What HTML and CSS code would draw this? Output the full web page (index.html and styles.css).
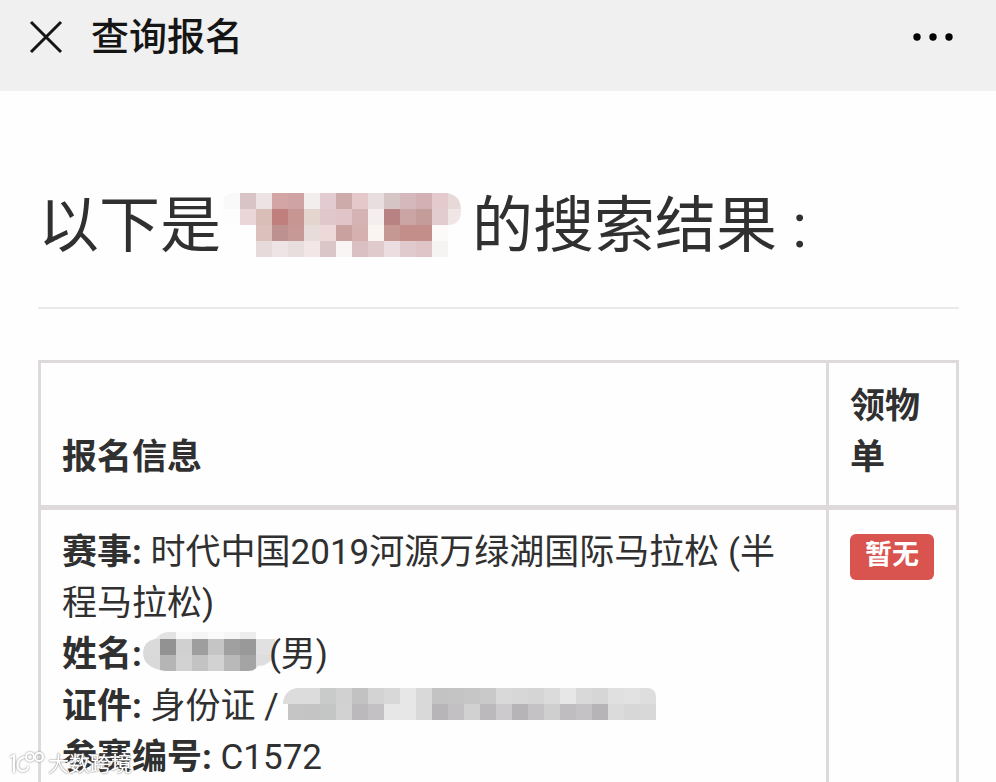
FILE: index.html
```html
<!DOCTYPE html>
<html lang="zh-CN">
<head>
  <meta charset="UTF-8">
  <meta name="viewport" content="width=device-width, initial-scale=1.0">
  <title>查询报名</title>
  <link rel="stylesheet" href="styles.css">
</head>
<body>

  <header class="navbar">
    <button class="icon-button" type="button" aria-label="关闭">
      <svg width="34" height="34" viewBox="0 0 34 34"><path d="M2 2L32 32M32 2L2 32" fill="none" stroke="#151515" stroke-width="3"/></svg>
    </button>
    <span class="navbar-title">查询报名</span>
    <button class="icon-button more" type="button" aria-label="更多">
      <svg width="40" height="8" viewBox="0 0 40 8" fill="#050505"><circle cx="4" cy="4" r="3.7"/><circle cx="20" cy="4" r="3.7"/><circle cx="36" cy="4" r="3.7"/></svg>
    </button>
  </header>

  <main class="container">
    <h1>以下是<svg class="mask mask-keyword" id="keyword" width="240" height="64" viewBox="0 0 240 64"></svg>的搜索结果 :</h1>

    <table class="table">
      <thead>
        <tr>
          <th>报名信息</th>
          <th class="pickup">领物单</th>
        </tr>
      </thead>
      <tbody>
        <tr>
          <td>
            <b>赛事:</b> 时代中国2019河源万绿湖国际马拉松 (半程马拉松)<br>
            <b>姓名:</b><svg class="mask mask-name" id="name" width="132" height="39" viewBox="0 0 132 39"></svg>(男)<br>
            <b>证件:</b> 身份证 /<svg class="mask mask-card" id="card" width="373" height="32" viewBox="0 0 373 32"></svg><br>
            <b>参赛编号:</b> C1572
          </td>
          <td class="pickup"><span class="label">暂无</span></td>
        </tr>
      </tbody>
    </table>
  </main>

  <div class="watermark">
    <svg width="38" height="28" viewBox="0 0 38 28" fill="none" stroke-linecap="round" stroke-linejoin="round">
      <g id="logo">
        <path d="M3 7L6 5V22M12 9C8 13 9 21 15 21C18 21 20 19 20 17M12 9L16 7"/>
        <circle cx="22" cy="7" r="4"/>
        <circle cx="31" cy="7" r="4"/>
      </g>
    </svg>
    <span class="watermark-text">大数跨境</span>
  </div>

  <script>
    // Hidden values are drawn as 16px tiles
    const masks = {
      keyword: {
        x: 3, y: 0, clip: 'M0 16Q0 0 14 0H226Q240 2 240 18Q240 32 227 32V64H34V32H3Q0 28 0 16Z',
        rows: [
          'f9f9f9 d8c3c6 eee3e4 d3a5a5 cfa3a4 f3eeee e3ccd1 cdabab e5c8ca e8dedf d5c5c5 d4b8bb d3b0b4 e4c9cd e8d9d9',
          'fdfdfd ead6d8 d9beb8 c07f7c c79692 e4d5cf dfc7cc e0c4c7 d5b2b4 f4eeef b88282 cba5a3 c49c9a e2ccd0 f0e6e6',
          'fefefe fefefe dbc0bc bc918f c69996 e8dcda edd9d7 c9a2a0 d5b0ae faf5f1 c59893 c38e8a c38e8a fbfaf9 fefefe',
          'fefefe fefefe e6dbda efe4e5 e8dedd f2e6e6 dac5c9 faf5f5 dac0c2 e1cacc ecdde1 e0cacd dfc5c8 f5f4f2 fefefe'
        ]
      },
      name: {
        x: 1, y: -9, clip: 'M0 20Q1 9 12 7Q18 0 26 0H113V7H132V20Q128 34 115 34Q112 39 105 39H22Q0 36 0 20Z',
        rows: [
          'e9e9e9 e2e2e2 fafafa f5f5f5 fafafa f5f5f5 ececec fefefe fefefe',
          'dadada 929292 d0d0d0 9e9e9e c5c5c5 a0a0a0 999999 e1e1e1 e1e1e1',
          'd9d9d9 b5b5b5 d2d2d2 c3c3c3 d2d2d2 b9b9b9 a4a4a4 dedede dedede'
        ]
      },
      card: {
        x: -11, y: 0, clip: 'M0 16Q2 0 16 0H366Q373 2 373 8V32H5V16Z',
        rows: [
          'dcdcdc dcdcdc dcdcdc c9caca d2d1d2 c3c2c3 d4d3d4 d9d8d9 e8e7e8 dad9da c4c3c4 c5c4c5 c7c6c7 cac9ca dad9da d8d7d8 d6d5d6 dcdbdc e8e7e8 dad9da d7d6d7 e1e0e1 e3e2e3 dfdedf',
          'c4c5c4 c4c5c4 c3c4c3 c4c6c5 d3d2d3 bbb9bb c3c1c3 e8e7e8 e8e7e8 dad9da b7b5b7 c2c0c2 d2d1d2 bbb9bb cccacc b6b4b6 c4c2c4 d0cfd0 bfbdbf c4c2c4 b6b4b6 dcdbdc d8d7d8 d9d8d9'
        ]
      }
    };

    for (const id in masks) {
      const mask = masks[id];
      let tiles = '';
      mask.rows.forEach((row, r) => {
        row.split(' ').forEach((color, c) => {
          tiles += `<rect x="${mask.x + c * 16}" y="${mask.y + r * 16}" width="16" height="16" fill="#${color}"/>`;
        });
      });
      // the rounded left end falls outside of the tile grid
      const first = '#' + mask.rows[1].split(' ')[0];
      document.getElementById(id).innerHTML =
        `<clipPath id="${id}-clip"><path d="${mask.clip}"/></clipPath>
         <g clip-path="url(#${id}-clip)" shape-rendering="crispEdges"><rect width="4" height="64" fill="${first}"/>${tiles}</g>`;
    }
  </script>

</body>
</html>
```
FILE: styles.css
```css
* {
  box-sizing: border-box;
}
body {
  font-family: Roboto, 'Noto Sans CJK SC', sans-serif;
  font-size: 35px;
  line-height: 51px;
  background-color: #fefefe;
  color: #303030;
  margin: 0;
  height: 100vh;
  overflow: hidden;
}
.navbar {
  display: flex;
  align-items: center;
  background-color: #f0f0f0;
  height: 91px;
  padding: 0 43px 17px 29px;
}
.icon-button {
  display: flex;
  padding: 0;
  border: none;
  background: none;
  cursor: pointer;
}
.navbar-title {
  margin-left: 28px;
  font-size: 38px;
  font-weight: 500;
  color: #151515;
}
.more {
  margin-left: auto;
}
.container {
  padding: 0 37px 0 38px;
}
h1 {
  margin: 0 0 51px;
  padding: 93px 0 38px;
  border-bottom: 2px solid #eaeaea;
  font-size: 61px;
  font-weight: 400;
  line-height: 84px;
}
.mask {
  vertical-align: middle;
}
.mask-keyword {
  margin: 0 11px 12px 0;
}
.mask-name {
  margin: 0 -6px 10px 1px;
}
.mask-card {
  margin: 0 0 10px 4px;
}
.table {
  width: 100%;
  border-collapse: collapse;
}
th, td {
  border: 3px solid #dedadc;
  padding: 17px 21px 18px;
  text-align: left;
  vertical-align: top;
}
th {
  padding: 18px 21px 22px;
  border-bottom-width: 5px;
  font-weight: 700;
  vertical-align: bottom;
}
.pickup {
  width: 130px;
}
.label {
  display: block;
  width: 84px;
  margin-top: 7px;
  padding-bottom: 4px;
  background-color: #d9534f;
  border-radius: 6px;
  color: #fff;
  font-size: 27px;
  font-weight: 700;
  line-height: 42px;
  text-align: center;
}
.watermark {
  position: fixed;
  left: 8px;
  bottom: 4px;
  display: flex;
  align-items: center;
  gap: 2px;
}
#logo {
  stroke: #fff;
  stroke-width: 2;
  filter: drop-shadow(0 0 1px #888);
}
.watermark-text {
  color: #fff;
  font-size: 21px;
  line-height: 28px;
  text-shadow: 0 0 1px #888, 0 0 2px #888;
}
```
